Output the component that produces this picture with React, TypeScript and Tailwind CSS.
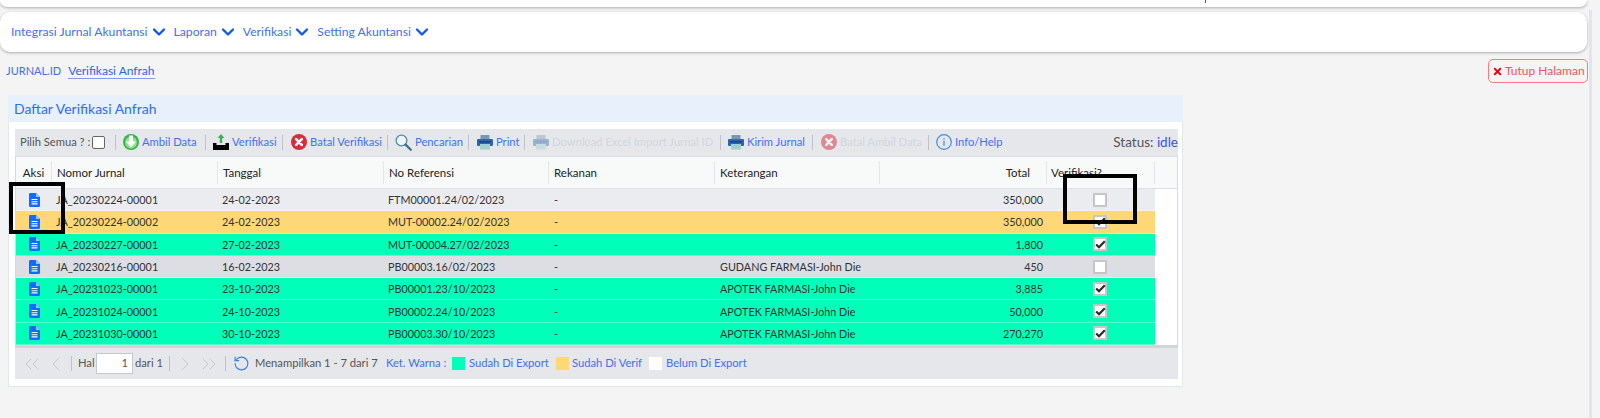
import React from "react";
import { ChevronDown, ChevronLeft, ChevronRight, ChevronsLeft, ChevronsRight, RotateCcw, X } from "lucide-react";

function Ambil({ dim = false }: { dim?: boolean }) {
  return (
    <svg width="16" height="16" viewBox="0 0 16 16" className={dim ? "opacity-50 shrink-0" : "shrink-0"}>
      <circle cx="8" cy="8" r="8" fill="#35b34a" />
      <circle cx="8" cy="8.500" r="6" fill="#8fe08f" />
      <path d="M6 1.500h4v6h3L8 13.500 3 7.500h3z" fill="#fff" />
    </svg>
  );
}
function Upload() {
  return (
    <svg width="16" height="16" viewBox="0 0 16 16" className="shrink-0">
      <path d="M0 9h3.500v2h9V9H16v7H0z" fill="#000" />
      <path d="M8 0l3.400 4H9.200v5H6.800V4H4.600z" fill="#3fae5c" />
    </svg>
  );
}
function Cancel({ dim = false }: { dim?: boolean }) {
  return (
    <svg width="16" height="16" viewBox="0 0 16 16" className={dim ? "opacity-50 shrink-0" : "shrink-0"}>
      <circle cx="8" cy="8" r="8" fill="#d92b3a" />
      <path d="M5.200 5.200l5.600 5.600M10.800 5.200l-5.600 5.600" stroke="#fff" strokeWidth="2.600" strokeLinecap="round" />
    </svg>
  );
}
function Search() {
  return (
    <svg width="17" height="17" viewBox="0 0 17 17" className="shrink-0">
      <circle cx="6.500" cy="6.500" r="5.400" fill="#eef5fa" stroke="#4f8ca8" strokeWidth="1.300" />
      <path d="M10.600 10.600l5.200 5.200" stroke="#3c7186" strokeWidth="2.200" strokeLinecap="round" />
    </svg>
  );
}
function Printer({ dim = false }: { dim?: boolean }) {
  return (
    <svg width="16" height="16" viewBox="0 0 16 16" className={dim ? "opacity-40 shrink-0" : "shrink-0"}>
      <rect x="3.500" y="1" width="9" height="4" fill="#7d97ad" />
      <rect x="0" y="5" width="16" height="7" rx="1" fill="#2b66b0" />
      <rect x="2" y="7" width="12" height="1.600" fill="#1d4680" />
      <rect x="3" y="10" width="10" height="5.500" fill="#9fd0cf" />
    </svg>
  );
}
function Info() {
  return (
    <svg width="16" height="16" viewBox="0 0 16 16" className="shrink-0">
      <circle cx="8" cy="8" r="7.300" fill="none" stroke="#3b8eea" strokeWidth="1.200" />
      <rect x="7.400" y="6.800" width="1.200" height="5" fill="#3b8eea" />
      <rect x="7.400" y="4.200" width="1.200" height="1.300" fill="#3b8eea" />
    </svg>
  );
}
function Doc() {
  return (
    <svg width="11" height="14" viewBox="0 0 11 14">
      <path d="M1.200 0H7l4 4v8.800a1.200 1.200 0 0 1-1.200 1.200H1.200A1.200 1.200 0 0 1 0 12.800V1.200A1.200 1.200 0 0 1 1.200 0z" fill="#0d6efd" />
      <path d="M7 0l4 4H7z" fill="#9cc4ff" />
      <path d="M2.500 6.500h6M2.500 8.700h6M2.500 10.900h6" stroke="#fff" strokeWidth="1.100" />
    </svg>
  );
}
function Check({ on }: { on: boolean }) {
  return (
    <span className="flex h-[14px] w-[14px] items-center justify-center border-2 border-[#c6c6c6] bg-white">
      {on && (
        <svg width="11" height="9" viewBox="0 0 11 9" className="shrink-0">
          <path d="M1.200 4.500l2.800 2.800 5.800-6" fill="none" stroke="#2a2a2a" strokeWidth="2.200" />
        </svg>
      )}
    </span>
  );
}

function Sep({ className = "mx-2" }: { className?: string }) {
  return <span className={`h-[15px] w-px shrink-0 bg-[#bfc3c9] ${className}`} />;
}

function Tool({ icon, label, dim = false, w }: { icon: React.ReactNode; label: string; dim?: boolean; w: string }) {
  return (
    <span className={`flex shrink-0 items-center gap-[3px] ${w}`}>
      {icon}
      <span className={`whitespace-nowrap ${dim ? "text-[#d3d6dc]" : "text-[#3f6ff2]"}`}>{label}</span>
    </span>
  );
}

const columns = [
  { label: "Nomor Jurnal", cls: "w-[166px]" },
  { label: "Tanggal", cls: "w-[166px]" },
  { label: "No Referensi", cls: "w-[165px]" },
  { label: "Rekanan", cls: "w-[166px]" },
  { label: "Keterangan", cls: "w-[165px]" },
];

const rows = [
  ["JA_20230224-00001", "24-02-2023", "FTM00001.24/02/2023", "-", "", "350,000", false, "bg-[#ebecef]"],
  ["JA_20230224-00002", "24-02-2023", "MUT-00002.24/02/2023", "-", "", "350,000", true, "bg-[#fed776]"],
  ["JA_20230227-00001", "27-02-2023", "MUT-00004.27/02/2023", "-", "", "1,800", true, "bg-[#00ffb9]"],
  ["JA_20230216-00001", "16-02-2023", "PB00003.16/02/2023", "-", "GUDANG FARMASI-John Die", "450", false, "bg-[#dcdee3]"],
  ["JA_20231023-00001", "23-10-2023", "PB00001.23/10/2023", "-", "APOTEK FARMASI-John Die", "3,885", true, "bg-[#00ffb9]"],
  ["JA_20231024-00001", "24-10-2023", "PB00002.24/10/2023", "-", "APOTEK FARMASI-John Die", "50,000", true, "bg-[#00ffb9]"],
  ["JA_20231030-00001", "30-10-2023", "PB00003.30/10/2023", "-", "APOTEK FARMASI-John Die", "270,270", true, "bg-[#00ffb9]"],
] as const;

export default function App() {
  return (
    <div className="relative h-[418px] overflow-hidden bg-[#f4f4f4] font-['Lato',sans-serif] text-[12px]">
      {/* page scrollbar strip */}
      <div className="absolute bottom-0 right-[8px] top-[10px] w-[3px] bg-[#e3e5ea]" />

      <div className="relative mr-[13px]">
        <div className="relative h-[7px] rounded-b-[10px] bg-white shadow-[0_1px_3px_rgba(0,0,0,0.3)]">
          <span className="absolute left-[1205px] top-0 h-[3px] w-px bg-[#555]" />
        </div>
        <div className="mt-[5px] flex h-[40px] items-center gap-[5px] rounded-[10px] bg-white pl-[11px] text-[12.200px] text-[#3f6ff2] shadow-[0_1px_3px_rgba(0,0,0,0.3)]">
          {["Integrasi Jurnal Akuntansi", "Laporan", "Verifikasi", "Setting Akuntansi"].map((m) => (
            <span key={m} className="flex items-center gap-[1px]">
              {m}
              <ChevronDown size={20} strokeWidth={2.800} className="text-[#0d57f0]" />
            </span>
          ))}
        </div>
      </div>

      <div className="mb-[12px] mr-[12px] mt-[7px] flex h-[24px] items-center justify-between pl-[6px]">
        <div className="flex items-center gap-[7px]">
          <span className="text-[11px] text-[#3f6ff2]">JURNAL.ID</span>
          <span className="border-b border-[#7d9cf5] leading-[14px] text-[#2f62ee]">Verifikasi Anfrah</span>
        </div>
        <span className="flex h-[24px] w-[100px] items-center gap-[2px] rounded-[5px] border border-[#ff7a7a] pl-[3px] text-[#f4525c]">
          <X size={11} strokeWidth={4} className="text-[#f00010]" />
          Tutup Halaman
        </span>
      </div>

      <div className="ml-[8px] w-[1175px] border border-t-0 border-[#e2e6ef] bg-white">
        <div className="-mx-px flex h-[27px] items-center bg-[#e8f0fc] pl-[6px] text-[14px] text-[#2f6cf0]">Daftar Verifikasi Anfrah</div>
        <div className="ml-[6px] mr-[4px] mt-[7px]">
          <div className="flex h-[27px] items-center bg-[#e6e7eb] pl-[5px] text-[11.200px] text-[#3f6ff2]">
            <span className="w-[72px] shrink-0 whitespace-nowrap text-[#555]">Pilih Semua ? :</span>
            <span className="h-[13px] w-[13px] shrink-0 rounded-[2px] border border-[#666] bg-white" />
            <Sep className="ml-[10px] mr-[7px]" />
            <Tool w="w-[73px]" icon={<Ambil />} label="Ambil Data" />
            <Sep className="ml-[9px] mr-[7px]" />
            <Tool w="w-[61px]" icon={<Upload />} label="Verifikasi" />
            <Sep className="ml-[8px] mr-[8px]" />
            <Tool w="w-[88px]" icon={<Cancel />} label="Batal Verifikasi" />
            <Sep className="ml-[8px] mr-[7px]" />
            <Tool w="w-[65px]" icon={<Search />} label="Pencarian" />
            <Sep className="ml-[8px] mr-[8px]" />
            <Tool w="w-[40px]" icon={<Printer />} label="Print" />
            <Sep className="ml-[7px] mr-[8px]" />
            <Tool w="w-[179px]" dim icon={<Printer dim />} label="Download Excel Import Jurnal ID" />
            <Sep className="ml-[8px] mr-[7px]" />
            <Tool w="w-[77px]" icon={<Printer />} label="Kirim Jurnal" />
            <Sep className="ml-[7px] mr-[8px]" />
            <Tool w="w-[99px]" dim icon={<Cancel dim />} label="Batal Ambil Data" />
            <Sep className="ml-[8px] mr-[7px]" />
            <Tool w="w-[65px]" icon={<Info />} label="Info/Help" />
            <span className="ml-auto whitespace-nowrap text-[13.500px] text-[#555]">
              Status: <span className="text-[#3a4ff0]">idle</span>
            </span>
          </div>

          <div className="border-l border-r border-[#d7dade]">
            <div className="flex h-[33px] items-center border-b border-t border-[#dde1e5] bg-[#f8fafa] text-[11.500px] text-[#222]">
              <div className="flex h-[23px] w-[36px] items-center justify-center border-r border-[#e4e7ea]">Aksi</div>
              {columns.map((c) => (
                <div key={c.label} className={`flex h-[23px] items-center border-r border-[#e4e7ea] pl-[5px] ${c.cls}`}>
                  {c.label}
                </div>
              ))}
              <div className="flex h-[23px] w-[167px] items-center justify-end border-r border-[#e4e7ea] pr-[16px]">Total</div>
              <div className="flex h-[23px] w-[108px] items-center border-r border-[#e4e7ea] pl-[4px]">Verifikasi?</div>
            </div>
            {rows.map((r) => (
              <div key={r[0]} className={`flex h-[22.300px] w-[1139px] items-center border-b border-[#ffffff55] text-[10.800px] text-[#333] ${r[7]}`}>
                <div className="flex w-[36px] justify-center"><Doc /></div>
                <div className="w-[166px] pl-[4px] pt-[1px]">{r[0]}</div>
                <div className="w-[166px] pl-[4px] pt-[1px]">{r[1]}</div>
                <div className="w-[165px] pl-[4px] pt-[1px]">{r[2]}</div>
                <div className="w-[166px] pl-[5px] pt-[1px]">{r[3]}</div>
                <div className="w-[165px] whitespace-nowrap pl-[5px] pt-[1px]">{r[4]}</div>
                <div className="w-[165px] pr-[2px] pt-[1px] text-right">{r[5]}</div>
                <div className="flex flex-1 justify-center"><Check on={r[6] as boolean} /></div>
              </div>
            ))}
          </div>

          <div className="flex h-[34px] items-center border-t-[3px] border-[#d2d4d8] bg-[#e6e7eb] pl-[5px] text-[11.200px] text-[#555]">
            <ChevronsLeft size={24} strokeWidth={1} className="shrink-0 text-[#c4c7cc]" />
            <ChevronLeft size={24} strokeWidth={1} className="shrink-0 text-[#c4c7cc]" />
            <Sep className="ml-[3px] mr-[6px]" />
            <span className="w-[18px]">Hal</span>
            <span className="flex h-[21px] w-[37px] items-center justify-end border border-[#c4c7cc] bg-white pr-[4px]">1</span>
            <span className="ml-[2px] w-[30px]">dari 1</span>
            <Sep className="ml-[4px] mr-[3px]" />
            <ChevronRight size={24} strokeWidth={1} className="shrink-0 text-[#c4c7cc]" />
            <ChevronsRight size={24} strokeWidth={1} className="shrink-0 text-[#c4c7cc]" />
            <Sep className="ml-[4px] mr-[7px]" />
            <RotateCcw size={17} strokeWidth={1.600} className="shrink-0 text-[#3b7fe6]" />
            <span className="ml-[5px] w-[131px] whitespace-nowrap">Menampilkan 1 - 7 dari 7</span>
            <span className="w-[66px] whitespace-nowrap text-[#3f6ff2]">Ket. Warna :</span>
            <span className="h-[13px] w-[13px] shrink-0 bg-[#00ffb9]" />
            <span className="ml-[4px] w-[87px] whitespace-nowrap text-[#3f6ff2]">Sudah Di Export</span>
            <span className="h-[13px] w-[13px] shrink-0 bg-[#fed776]" />
            <span className="ml-[3px] w-[77px] whitespace-nowrap text-[#3f6ff2]">Sudah Di Verif</span>
            <span className="h-[13px] w-[13px] shrink-0 bg-white" />
            <span className="ml-[4px] whitespace-nowrap text-[#3f6ff2]">Belum Di Export</span>
          </div>
        </div>
        <div className="h-[7px]" />
      </div>

      {/* annotation rectangles drawn over the page */}
      <div className="pointer-events-none absolute left-[9px] top-[182px] h-[52px] w-[56px] border-4 border-black" />
      <div className="pointer-events-none absolute left-[1063px] top-[174px] h-[50px] w-[74px] border-4 border-black" />
    </div>
  );
}
